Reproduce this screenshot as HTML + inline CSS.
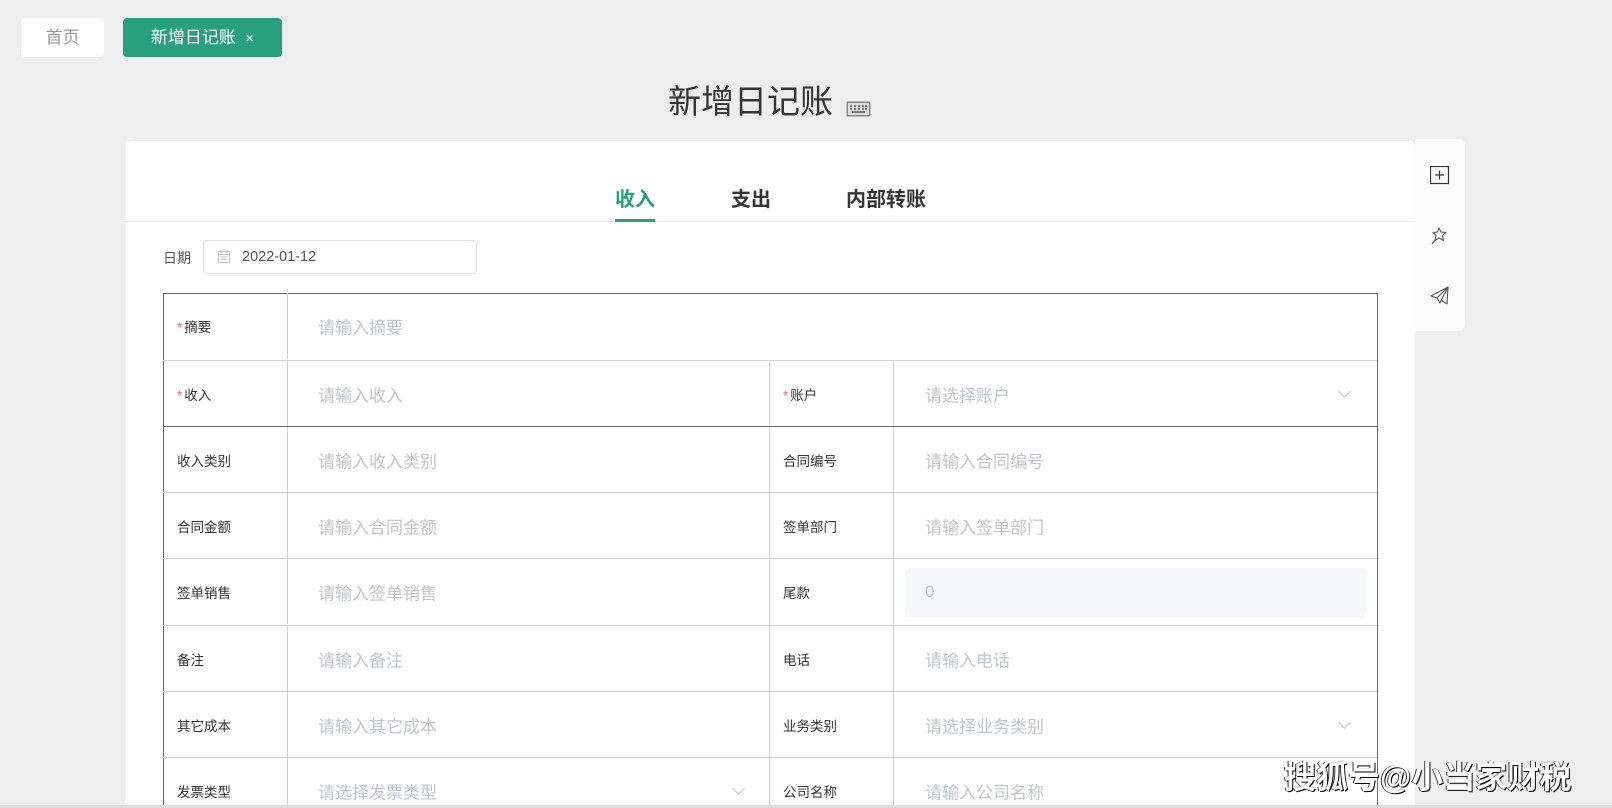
<!DOCTYPE html>
<html><head><meta charset="utf-8"><style>
*{margin:0;padding:0;box-sizing:border-box}
html,body{width:1612px;height:808px;overflow:hidden}
body{background:#eeeeee;font-family:"Liberation Sans","Noto Sans CJK SC",sans-serif;position:relative}
.a{position:absolute}
.tab{position:absolute;top:18px;height:39px;border-radius:4px;font-size:17px;line-height:39px;text-align:center}
.card{left:125px;top:141px;width:1290px;height:664px;background:#fff;border-radius:6px 6px 0 0}
.side{left:1415px;top:139px;width:50px;height:192px;background:#fbfbfb;border-radius:0 6px 6px 0}
.row{position:absolute;left:163px;width:1214px;border-top:1px solid #d2d2d2;height:66px}
.lab{position:absolute;font-size:13.5px;color:#333;top:50%;transform:translateY(-50%)}
.ph{position:absolute;font-size:17px;color:#c0c4cc;top:50%;transform:translateY(-50%)}
.vl{position:absolute;top:0;bottom:0;width:1px;background:#d2d2d2}
.star{color:#f56c6c;margin-right:2px}
.chev{position:absolute;width:9px;height:9px;border-right:1px solid #c0c4cc;border-bottom:1px solid #c0c4cc;transform:rotate(45deg);top:26px}
</style></head><body>
<div class="tab" style="left:21px;width:83px;background:#fff;color:#999">首页</div>
<div class="tab" style="left:123px;width:159px;background:#27a07b;color:#fff">新增日记账 &nbsp;<span style="font-size:15px">×</span></div>
<div class="a" style="left:668px;top:82px;font-size:33px;color:#333;line-height:40px">新增日记账</div>
<svg class="a" style="left:846px;top:101px" width="25" height="16" viewBox="0 0 25 16"><rect x="0.5" y="0.5" width="24" height="15" rx="1.5" fill="#888"/><rect x="2" y="2" width="21" height="12" fill="#ddd"/><g fill="#777"><rect x="4" y="4" width="2" height="2"/><rect x="8" y="4" width="2" height="2"/><rect x="12" y="4" width="2" height="2"/><rect x="16" y="4" width="2" height="2"/><rect x="19" y="4" width="2" height="2"/><rect x="4" y="7" width="2" height="2"/><rect x="8" y="7" width="2" height="2"/><rect x="12" y="7" width="2" height="2"/><rect x="16" y="7" width="2" height="2"/><rect x="19" y="7" width="2" height="2"/><rect x="6" y="10" width="13" height="2"/></g></svg>
<div class="a card"></div>
<div class="a side"></div>
<svg class="a" style="left:1430px;top:166px" width="20" height="19"><rect x="0.5" y="0.5" width="18" height="17" fill="none" stroke="#333" stroke-width="1.2"/><path d="M9.5 4.5v9M5 9h9" stroke="#333" stroke-width="1.2"/></svg>
<svg class="a" style="left:1430px;top:226px" width="20" height="20" viewBox="0 0 20 20"><path d="M9 2l2 4 5 0.5-3.5 3 1 5-4.5-2.5-4 2.5 1-5L3 6.5l4.5-0.5z" fill="none" stroke="#555" stroke-width="1.1" stroke-linejoin="round"/><path d="M6 13L2 18" stroke="#555" stroke-width="1.1"/></svg>
<svg class="a" style="left:1430px;top:286px" width="20" height="20" viewBox="0 0 20 20"><path d="M18 1L1 10l6 2 3 5z M18 1L7 12 M18 1l-1 17-6-4" fill="none" stroke="#555" stroke-width="1.1" stroke-linejoin="round"/></svg>
<div class="a" style="left:615px;top:183px;font-size:20px;font-weight:bold;color:#27a07b">收入</div>
<div class="a" style="left:731px;top:183px;font-size:20px;font-weight:bold;color:#333">支出</div>
<div class="a" style="left:846px;top:183px;font-size:20px;font-weight:bold;color:#333">内部转账</div>
<div class="a" style="left:125px;top:221px;width:1290px;height:1px;background:#e4e7ed"></div>
<div class="a" style="left:615px;top:219px;width:40px;height:3px;background:#27a07b"></div>
<div class="a" style="left:163px;top:248px;font-size:14px;color:#555">日期</div>
<div class="a" style="left:203px;top:240px;width:274px;height:34px;border:1px solid #dcdfe6;border-radius:4px"></div>
<svg class="a" style="left:218px;top:250px" width="12" height="13"><rect x="0.5" y="1.5" width="11" height="11" fill="none" stroke="#c0c4cc"/><path d="M0.5 4.5h11M3 0v3M9 0v3M2.5 7h7M2.5 9.5h7" stroke="#c0c4cc"/></svg>
<div class="a" style="left:242px;top:249px;font-size:14.5px;color:#555">2022-01-12</div>

<div class="a" style="left:163px;top:293px;width:1215px;height:515px;border:1px solid #666;border-bottom:none"></div>
<div class="row" style="top:293px;border-top:none"><div class="vl" style="left:124px"></div><span class="lab" style="left:14px"><span class="star">*</span>摘要</span><span class="ph" style="left:155px">请输入摘要</span></div>
<div class="row" style="top:360px"><div class="vl" style="left:124px"></div><div class="vl" style="left:606px"></div><div class="vl" style="left:730px"></div><span class="lab" style="left:14px"><span class="star">*</span>收入</span><span class="ph" style="left:155px">请输入收入</span><span class="lab" style="left:620px"><span class="star">*</span>账户</span><span class="ph" style="left:762px">请选择账户</span><div class="chev" style="left:1177px"></div></div>
<div class="row" style="top:426px;border-top:1px solid #666"><div class="vl" style="left:124px"></div><div class="vl" style="left:606px"></div><div class="vl" style="left:730px"></div><span class="lab" style="left:14px">收入类别</span><span class="ph" style="left:155px">请输入收入类别</span><span class="lab" style="left:620px">合同编号</span><span class="ph" style="left:762px">请输入合同编号</span></div>
<div class="row" style="top:492px"><div class="vl" style="left:124px"></div><div class="vl" style="left:606px"></div><div class="vl" style="left:730px"></div><span class="lab" style="left:14px">合同金额</span><span class="ph" style="left:155px">请输入合同金额</span><span class="lab" style="left:620px">签单部门</span><span class="ph" style="left:762px">请输入签单部门</span></div>
<div class="row" style="top:558px"><div class="vl" style="left:124px"></div><div class="vl" style="left:606px"></div><div class="vl" style="left:730px"></div><span class="lab" style="left:14px">签单销售</span><span class="ph" style="left:155px">请输入签单销售</span><span class="lab" style="left:620px">尾款</span><div class="a" style="left:742px;top:9px;width:461px;height:49px;background:#f5f7fa;border-radius:4px"></div><span class="ph" style="left:762px">0</span></div>
<div class="row" style="top:625px"><div class="vl" style="left:124px"></div><div class="vl" style="left:606px"></div><div class="vl" style="left:730px"></div><span class="lab" style="left:14px">备注</span><span class="ph" style="left:155px">请输入备注</span><span class="lab" style="left:620px">电话</span><span class="ph" style="left:762px">请输入电话</span></div>
<div class="row" style="top:691px"><div class="vl" style="left:124px"></div><div class="vl" style="left:606px"></div><div class="vl" style="left:730px"></div><span class="lab" style="left:14px">其它成本</span><span class="ph" style="left:155px">请输入其它成本</span><span class="lab" style="left:620px">业务类别</span><span class="ph" style="left:762px">请选择业务类别</span><div class="chev" style="left:1177px"></div></div>
<div class="row" style="top:757px;height:48px"><div class="vl" style="left:124px"></div><div class="vl" style="left:606px"></div><div class="vl" style="left:730px"></div><span class="lab" style="left:14px;top:33px">发票类型</span><span class="ph" style="left:155px;top:33px">请选择发票类型</span><span class="lab" style="left:620px;top:33px">公司名称</span><span class="ph" style="left:762px;top:33px">请输入公司名称</span><div class="chev" style="left:571px"></div></div>
<div class="a" style="left:0;top:805px;width:1612px;height:3px;background:#ddd"></div>
<div class="a" style="left:1284px;top:752px;font-size:32px;font-weight:bold;color:#fff;text-shadow:1px 1px 0 #000,-1px 0 0 #333">搜狐号@小当家财税</div>
</body></html>
